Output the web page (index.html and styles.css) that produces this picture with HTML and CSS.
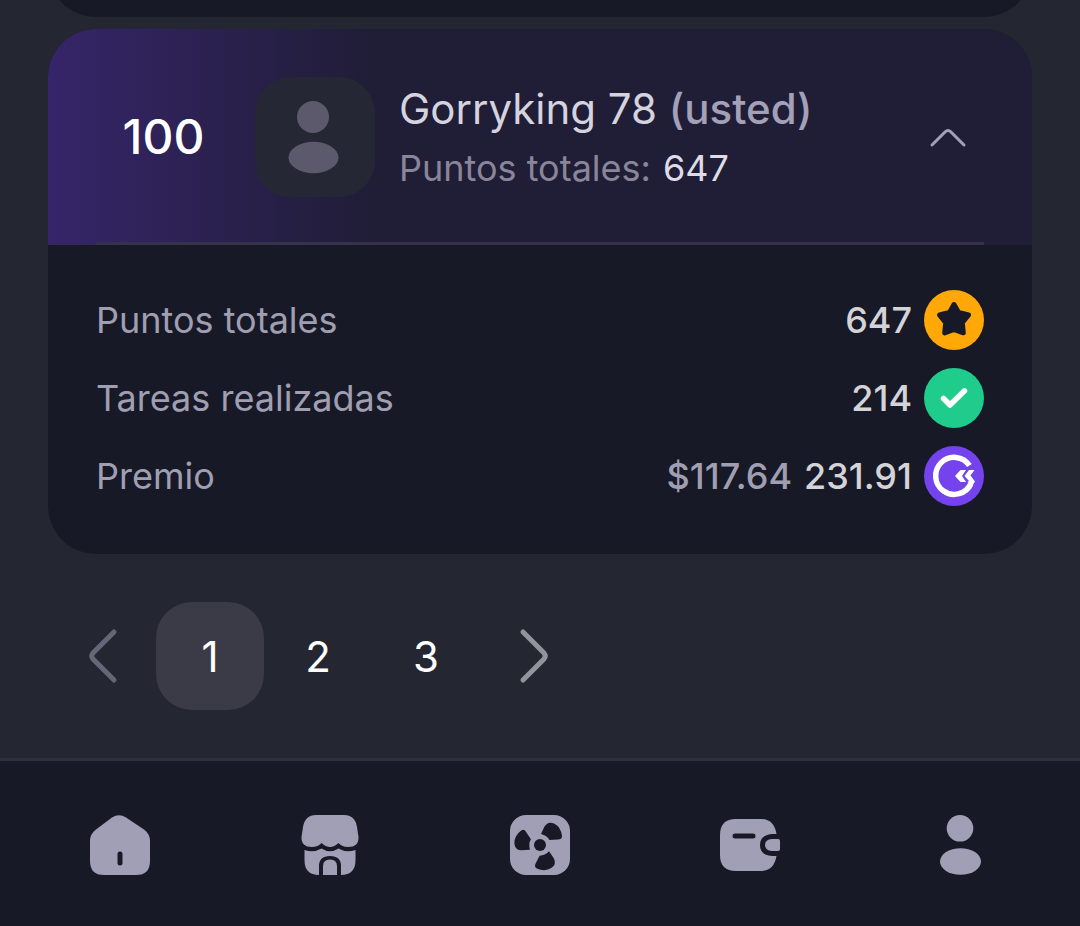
FILE: index.html
```html
<!DOCTYPE html>
<html lang="es">
<head>
  <meta charset="utf-8">
  <meta name="viewport" content="width=device-width, initial-scale=1">
  <title>Clasificación</title>
  <link rel="stylesheet" href="styles.css">
</head>
<body>
  <main>
    <div class="card card-prev"></div>

    <section class="card">
      <div class="card-head">
        <button type="button" class="player" aria-expanded="true" aria-controls="details">
          <span class="rank">100</span>
          <span class="avatar">
            <svg viewBox="0 0 120 120" aria-hidden="true">
              <circle cx="58" cy="40" r="16"/>
              <ellipse cx="58.500" cy="80.500" rx="25" ry="15.700"/>
            </svg>
          </span>
          <span class="info">
            <span class="name">Gorryking 78 <span class="you">(usted)</span></span>
            <span class="points">Puntos totales: <span class="value">647</span></span>
          </span>
          <svg class="chevron" viewBox="0 0 72 72" aria-hidden="true">
            <path d="M20 44L33 31Q36 28 39 31L52 44"/>
          </svg>
        </button>
      </div>

      <dl class="details" id="details">
        <div class="row">
          <dt>Puntos totales</dt>
          <dd>
            <span>647</span>
            <svg class="badge" viewBox="0 0 60 60" aria-hidden="true">
              <circle cx="30" cy="30" r="30" fill="#ffa808"/>
              <path d="M30 14.500L34.500 22.500L44.500 25L38.300 32.800L39.300 42.800L30 39.500L20.700 42.800L21.700 32.800L15.500 25L25.500 22.500Z" fill="#181927" stroke="#181927" stroke-width="5" stroke-linejoin="round"/>
            </svg>
          </dd>
        </div>
        <div class="row">
          <dt>Tareas realizadas</dt>
          <dd>
            <span>214</span>
            <svg class="badge" viewBox="0 0 60 60" aria-hidden="true">
              <circle cx="30" cy="30" r="30" fill="#1fcc8c"/>
              <path d="M19.500 30.500L26 37L40.500 22.800" fill="none" stroke="#fff" stroke-width="5.500" stroke-linecap="round" stroke-linejoin="round"/>
            </svg>
          </dd>
        </div>
        <div class="row">
          <dt>Premio</dt>
          <dd>
            <span class="usd">$117.64</span>
            <span>231.91</span>
            <svg class="badge" viewBox="0 0 60 60" aria-hidden="true">
              <circle cx="30" cy="30" r="30" fill="#7543ee"/>
              <path d="M45.500 19.500A18.500 18.500 0 1 0 47 37.500" fill="none" stroke="#fff" stroke-width="5.500"/>
              <path d="M36.500 24H42L38 30L42 36H36.500L31 30Z" fill="#fff"/>
              <path d="M45 24H50.500L46.500 29.500L51 35.500L48 40L43.500 36L45 35L40.500 30Z" fill="#fff"/>
            </svg>
          </dd>
        </div>
      </dl>
    </section>

    <nav class="pagination" aria-label="Páginas">
      <button type="button" class="page prev" aria-label="Anterior">
        <svg viewBox="0 0 108 108" aria-hidden="true"><path d="M66 30L45 51Q42.500 54 45 57L66 78"/></svg>
      </button>
      <button type="button" class="page active" aria-current="page">1</button>
      <button type="button" class="page">2</button>
      <button type="button" class="page">3</button>
      <button type="button" class="page next" aria-label="Siguiente">
        <svg viewBox="0 0 108 108" aria-hidden="true"><path d="M43 30L64 51Q66.500 54 64 57L43 78"/></svg>
      </button>
    </nav>
  </main>

  <nav class="tabbar" aria-label="Principal">
    <a href="#" aria-label="Inicio">
      <svg viewBox="0 0 60 60">
        <path d="M22 2.500Q29 -2 36 2.500L54 14.500Q60 19 60 26V46Q60 60 46 60H14Q0 60 0 46V26Q0 19 6 14.500Z"/>
        <path class="cut-line" d="M30 39V48"/>
      </svg>
    </a>
    <a href="#" aria-label="Tienda">
      <svg viewBox="0 0 60 60">
        <path d="M16 0H44Q55 0 57 12L58.500 22Q59 32 48 32Q42 32 38.500 28Q30 36 21.500 28Q18 32 12 32Q1 32 1.500 22L3 12Q5 0 16 0Z"/>
        <path d="M4.500 35Q14 38 21.500 33.500Q30 39 38.500 33.500Q46 38 55.500 35V45Q55.500 60 41 60V51Q41 41 30 41Q19 41 19 51V60Q4.500 60 4.500 45Z"/>
        <path d="M23 60V51Q23 44.500 30 44.500Q37 44.500 37 51V60Z"/>
      </svg>
    </a>
    <a href="#" aria-label="Minería">
      <svg viewBox="0 0 60 60">
        <rect width="60" height="60" rx="16"/>
        <g class="cut">
          <circle cx="30" cy="30" r="6"/>
          <path d="M31 19L34.500 11.500Q38 6 44 8.500Q51 12 52 21Q52 24.500 48 24.500L39.500 25Q37 20.500 31 19Z"/>
          <path d="M31 19L34.500 11.500Q38 6 44 8.500Q51 12 52 21Q52 24.500 48 24.500L39.500 25Q37 20.500 31 19Z" transform="rotate(120 30 30)"/>
          <path d="M31 19L34.500 11.500Q38 6 44 8.500Q51 12 52 21Q52 24.500 48 24.500L39.500 25Q37 20.500 31 19Z" transform="rotate(240 30 30)"/>
        </g>
      </svg>
    </a>
    <a href="#" aria-label="Cartera">
      <svg viewBox="0 0 60 60">
        <path d="M16 4H41Q54 4 56.500 19H52Q40 20 40 30Q40 40 52 41H56.500Q54 56 41 56H16Q0 56 0 40V20Q0 4 16 4Z"/>
        <path class="cut-line" d="M15 21H33"/>
        <path d="M52 24H58Q60 24 60 26V34Q60 36 58 36H52Q45 35.500 45 30Q45 24.500 52 24Z"/>
      </svg>
    </a>
    <a href="#" aria-label="Perfil">
      <svg viewBox="0 0 60 60">
        <circle cx="30" cy="13.300" r="13.300"/>
        <ellipse cx="30.500" cy="46.500" rx="20.500" ry="13.300"/>
      </svg>
    </a>
  </nav>
</body>
</html>
```
FILE: styles.css
```css
* {
  box-sizing: border-box;
}

body {
  margin: 0;
  min-height: 100vh;
  display: flex;
  flex-direction: column;
  background: #242631;
  color: #fff;
  font-family: Inter, "Liberation Sans", sans-serif;
  overflow-x: hidden;
}

main {
  flex: 1;
  padding: 0 48px 48px;
}

button {
  border: 0;
  padding: 0;
  background: none;
  color: inherit;
  font: inherit;
  cursor: pointer;
}

svg {
  display: block;
}

/* cards */
.card {
  background: #181927;
  border-radius: 48px;
  overflow: hidden;
}

.card-prev {
  height: 96px;
  margin-top: -79px;
  margin-bottom: 12px;
}

.card-head {
  padding: 0 48px;
  background: linear-gradient(90deg, #362569 0, #201d37 324px);
}

.player {
  width: 100%;
  display: flex;
  align-items: center;
  gap: 24px;
  padding: 48px 0 45px;
  border-bottom: 3px solid #37324c;
  text-align: left;
}

.rank {
  width: 135px;
  text-align: center;
  font-size: 48px;
  line-height: 60px;
  font-weight: 500;
}

.avatar {
  width: 120px;
  height: 120px;
  border-radius: 36px;
  background: #262734;
}

.avatar svg {
  fill: #5c596c;
}

.info {
  flex: 1;
  display: flex;
  flex-direction: column;
  gap: 2px;
}

.name {
  font-size: 42px;
  line-height: 60px;
  color: #d5d3de;
}

.you {
  color: #a3a0b8;
  font-weight: 500;
}

.points {
  display: flex;
  gap: 12px;
  font-size: 36px;
  line-height: 54px;
  color: #898699;
}

.value {
  color: #dedce6;
}

.chevron {
  width: 72px;
  height: 72px;
  fill: none;
  stroke: #a3a0b8;
  stroke-width: 3;
  stroke-linecap: round;
}

/* details */
.details {
  margin: 0;
  padding: 45px 48px 48px;
  display: flex;
  flex-direction: column;
  gap: 18px;
  font-size: 36px;
}

.row {
  display: flex;
  justify-content: space-between;
  align-items: center;
}

.row dt {
  color: #a09fb2;
}

.row dd {
  margin: 0;
  display: flex;
  align-items: center;
  gap: 12px;
  color: #d4d4d8;
  font-weight: 500;
}

.row .usd {
  color: #a09fb2;
}

.badge {
  width: 60px;
  height: 60px;
}

/* pagination */
.pagination {
  display: flex;
  margin-top: 48px;
}

.page {
  width: 108px;
  height: 108px;
  border-radius: 36px;
  font-size: 42px;
}

.page.active {
  background: #3b3b48;
}

.page svg {
  fill: none;
  stroke-width: 5;
  stroke-linecap: round;
}

.prev svg {
  stroke: #666678;
}

.next svg {
  stroke: #92949b;
}

/* bottom bar */
.tabbar {
  display: flex;
  justify-content: space-around;
  padding: 54px 15px 51px;
  border-top: 3px solid #302f3f;
  background: #181927;
}

.tabbar svg {
  width: 60px;
  height: 60px;
  fill: #a19fb5;
}

.tabbar .cut {
  fill: #181927;
}

.tabbar .cut-line {
  fill: none;
  stroke: #181927;
  stroke-width: 5;
  stroke-linecap: round;
}
```
